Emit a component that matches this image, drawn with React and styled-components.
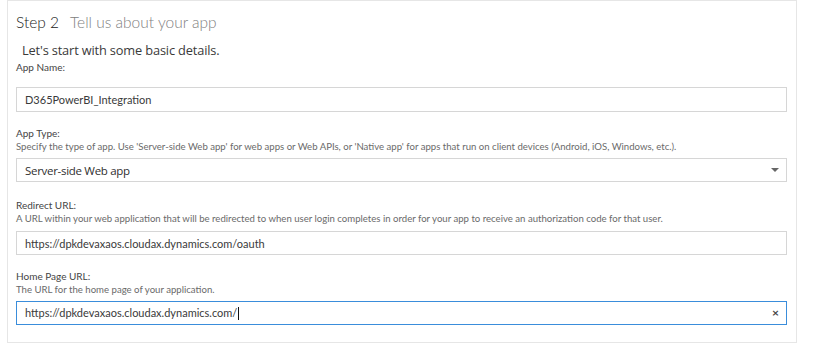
import React from 'react';
import styled, {createGlobalStyle} from 'styled-components';

const GlobalStyle = createGlobalStyle`
  html, body {
    margin: 0;
    padding: 0;
    background: #fff;
  }
  body {
    font-family: Lato, "Open Sans", "Liberation Sans", sans-serif;
    color: #333;
  }
`

const Panel = styled.div`
  box-sizing: border-box;
  width: 790px;
  height: 343px;
  margin-left: 7px;
  border: 1px solid #e6e6e6;
  padding: 11px 8px 0 8px;
`

const Title = styled.h1`
  margin: 0;
  height: 20px;
  font-size: 15.5px;
  font-weight: 300;
  line-height: 20px;
  color: #222;
  span {
    margin-left: 11px;
    color: #808080;
  }
`

const Intro = styled.p`
  margin: 9px 0 0 6px;
  height: 18px;
  font-family: "Open Sans", Lato, sans-serif;
  font-size: 12.8px;
  letter-spacing: -0.15px;
  line-height: 18px;
  color: #3a3a3a;
`

const Field = styled.div`
  margin-top: ${p => p.top}px;
`

const Label = styled.div`
  font-size: 10px;
  line-height: 14px;
  height: 14px;
  color: #444;
`

const Hint = styled.div`
  font-size: 9.6px;
  line-height: 14px;
  height: 14px;
  color: #6a6a6a;
  white-space: nowrap;
`

const Box = styled.div`
  box-sizing: border-box;
  display: flex;
  align-items: center;
  width: 771px;
  height: ${p => p.tall || 24}px;
  margin-top: ${p => p.gap}px;
  padding: 0 7px 0 8px;
  border: 1px solid ${p => (p.focused ? '#3a8ddb' : '#d6d6d6')};
  background: #fff;
  font-size: 11px;
  color: #3a3a3a;
`

const Value = styled.span`
  flex: 1;
  white-space: nowrap;
`

const Choice = styled(Value)`
  font-family: "Open Sans", Lato, sans-serif;
  font-size: 11.5px;
  letter-spacing: -0.3px;
  color: #2f2f2f;
`

const Caret = styled.span`
  display: inline-block;
  width: 1px;
  height: 13px;
  margin-left: 1px;
  vertical-align: -3px;
  background: #111;
`

const Arrow = styled.span`
  width: 0;
  height: 0;
  border-left: 4px solid transparent;
  border-right: 4px solid transparent;
  border-top: 4px solid #666;
`

const Clear = styled.span`
  font-size: 12px;
  font-weight: 700;
  line-height: 12px;
  color: #444;
`

export default function App() {
  return (
    <>
      <GlobalStyle />
      <Panel>
        <Title>
          Step 2<span>Tell us about your app</span>
        </Title>
        <Intro>Let's start with some basic details.</Intro>

        <Field top={1}>
          <Label>App Name:</Label>
          <Box gap={13} tall={25}>
            <Value>D365PowerBI_Integration</Value>
          </Box>
        </Field>

        <Field top={14}>
          <Label>App Type:</Label>
          <Hint>
            Specify the type of app. Use 'Server-side Web app' for web apps or Web APIs, or 'Native app' for apps that run on client devices (Android, iOS, Windows, etc.).
          </Hint>
          <Box gap={4}>
            <Choice>Server-side Web app</Choice>
            <Arrow />
          </Box>
        </Field>

        <Field top={16}>
          <Label>Redirect URL:</Label>
          <Hint>
            A URL within your web application that will be redirected to when user login completes in order for your app to receive an authorization code for that user.
          </Hint>
          <Box gap={5}>
            <Value>https://dpkdevaxaos.cloudax.dynamics.com/oauth</Value>
          </Box>
        </Field>

        <Field top={14}>
          <Label>Home Page URL:</Label>
          <Hint>The URL for the home page of your application.</Hint>
          <Box gap={4} focused>
            <Value>
              https://dpkdevaxaos.cloudax.dynamics.com/<Caret />
            </Value>
            <Clear>×</Clear>
          </Box>
        </Field>
      </Panel>
    </>
  );
}
